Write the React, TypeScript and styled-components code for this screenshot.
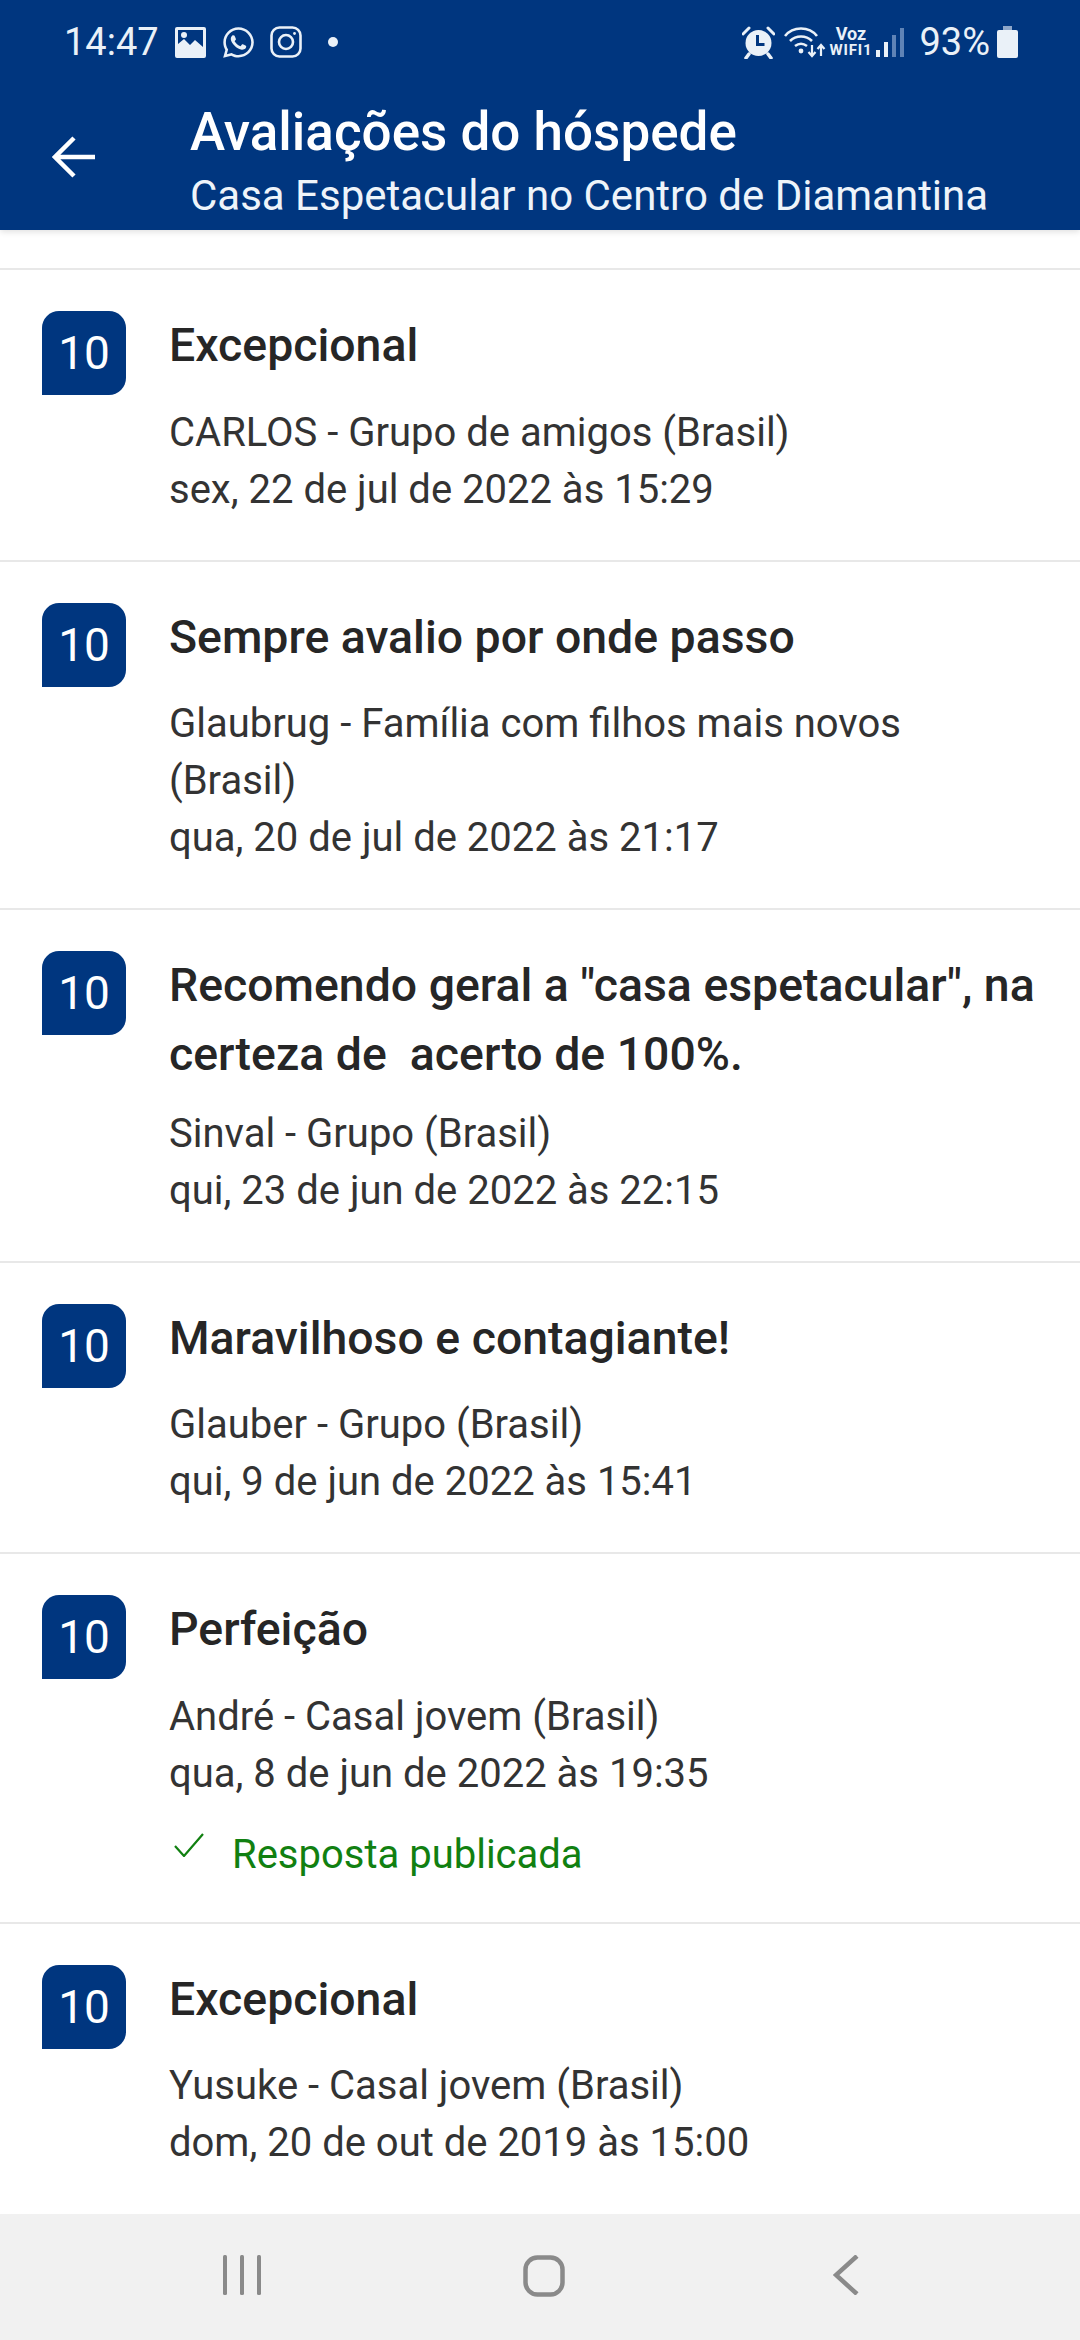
import * as React from 'react';
import styled, {createGlobalStyle} from 'styled-components';
import {FaWhatsapp} from 'react-icons/fa';

const GlobalStyle = createGlobalStyle`
	html, body {
		margin: 0;
		padding: 0;
		background: #fff;
		font-family: Roboto, "Liberation Sans", sans-serif;
	}
	* {
		box-sizing: border-box;
	}
`;

const Page = styled.div`
	width: 1080px;
	height: 2340px;
	display: flex;
	flex-direction: column;
	overflow: hidden;
	background: #fff;
`;

const Header = styled.header`
	height: 230px;
	flex: none;
	background: #00367f;
	color: #fff;
	box-shadow: 0 2px 6px rgba(0, 0, 0, 0.12);
	position: relative;
	z-index: 1;
`;

const StatusBar = styled.div`
	height: 84px;
	display: flex;
	align-items: center;
	padding: 0 62px 0 64px;
	color: #eaf1f8;
`;

const StatusGroup = styled.div`
	display: flex;
	align-items: center;
`;

const Clock = styled.span`
	font-size: 38px;
	margin-right: 17px;
	width: 94px;
`;

const Dot = styled.span`
	width: 10px;
	height: 10px;
	border-radius: 50%;
	background: #eaf1f8;
	margin-left: 26px;
`;

const Spacer = styled.div`
	flex: 1;
`;

const VoiceLabel = styled.div`
	display: flex;
	flex-direction: column;
	align-items: center;
	width: 39px;
	margin: 0 6px 0 5px;
	font-weight: 700;
`;

const VoiceLine = styled.span<{$size: number; $spacing: number}>`
	font-size: ${p => p.$size}px;
	letter-spacing: ${p => p.$spacing}px;
	line-height: 16px;
	white-space: nowrap;
`;

const Battery = styled.span`
	font-size: 38px;
	margin: 0 7px 0 15px;
`;

const AppBar = styled.div`
	display: flex;
	height: 146px;
`;

const BackButton = styled.div`
	width: 190px;
	flex: none;
	padding: 51px 0 0 52px;
`;

const AppTitles = styled.div`
	padding-top: 19px;
`;

const Title = styled.div`
	font-size: 53px;
	line-height: 58px;
	font-weight: 500;
	white-space: nowrap;
`;

const Subtitle = styled.div`
	font-size: 42px;
	line-height: 46px;
	margin-top: 12px;
	color: #eef4fa;
	white-space: nowrap;
`;

const ReviewList = styled.main`
	flex: 1;
	padding-top: 38px;
	overflow: hidden;
`;

const Row = styled.article`
	display: flex;
	gap: 43px;
	padding: 41px 30px 42px 42px;
	border-top: 2px solid #e8e8e8;
`;

const Score = styled.div`
	width: 84px;
	height: 84px;
	flex: none;
	background: #00367f;
	color: #fff;
	border-radius: 17px 17px 17px 0;
	display: flex;
	align-items: center;
	justify-content: center;
	font-size: 46px;
	font-weight: 400;
`;

const Content = styled.div`
	flex: 1;
	min-width: 0;
`;

const ReviewTitle = styled.h2`
	margin: 0;
	min-height: 77px;
	font-size: 46.400px;
	line-height: 69px;
	font-weight: 500;
	color: #262626;
	white-space: pre-wrap;
`;

const Meta = styled.div`
	margin-top: 15.500px;
	font-size: 40px;
	line-height: 57px;
	color: #333;
`;

const Reply = styled.div`
	display: flex;
	align-items: center;
	margin-top: 28px;
	height: 50px;
	padding-left: 5px;
	gap: 28px;
	font-size: 40px;
	color: #118011;
`;

const NavBar = styled.nav`
	height: 126px;
	flex: none;
	background: #f1f1f1;
	display: grid;
	grid-template-columns: repeat(3, 302px);
	justify-content: center;
	padding: 41px 0 0 8px;
`;

const NavCell = styled.div`
	display: flex;
	justify-content: center;
`;

const ImageIcon = () => (
	<svg width="31" height="31" viewBox="0 0 31 31" style={{marginRight: 15}}>
		<path fill="#eaf1f8" fillRule="evenodd" d="M2 0h27a2 2 0 0 1 2 2v27a2 2 0 0 1-2 2H2a2 2 0 0 1-2-2V2a2 2 0 0 1 2-2zm1 3v14l6-5 6 6 5-5 8 7V3z"/>
		<circle cx="9" cy="8" r="3" fill="#eaf1f8"/>
	</svg>
);

const InstagramIcon = () => (
	<svg width="32" height="32" viewBox="0 0 32 32" fill="none" stroke="#eaf1f8" strokeWidth="2.6" style={{marginLeft: 14}}>
		<rect x="1.5" y="1.5" width="29" height="29" rx="8"/>
		<circle cx="16" cy="16" r="7"/>
		<circle cx="24.5" cy="7.5" r="1.4" fill="#eaf1f8" stroke="none"/>
	</svg>
);

const AlarmIcon = () => (
	<svg width="33" height="33" viewBox="0 0 33 33" style={{marginRight: 9}}>
		<circle cx="16.5" cy="17" r="13" fill="#eaf1f8"/>
		<path d="M1 8l6-6M32 8l-6-6" stroke="#eaf1f8" strokeWidth="3" strokeLinecap="round"/>
		<path d="M7 28l-3 4M26 28l3 4" stroke="#eaf1f8" strokeWidth="3.5" strokeLinecap="round"/>
		<path d="M15.5 9v9.5h7" fill="none" stroke="#00367f" strokeWidth="3"/>
	</svg>
);

const WifiIcon = () => (
	<svg width="42" height="32" viewBox="0 0 42 32" fill="none" stroke="#eaf1f8" strokeWidth="2.6">
		<path d="M1 10C9 0 25 0 33 10"/>
		<path d="M6 15c6-6 16-6 22 0"/>
		<path d="M11 20c4-3 8-3 12 0"/>
		<circle cx="17" cy="25" r="2.4" fill="#eaf1f8" stroke="none"/>
		<path d="M28 19v11M24.500 26l3.500 4 3.500-4" strokeWidth="2.2"/>
		<path d="M37 30V19M33.500 23l3.500-4 3.500 4" strokeWidth="2.2"/>
	</svg>
);

const SignalIcon = () => (
	<svg width="28" height="32" viewBox="0 0 28 32">
		<rect x="0" y="24" width="4" height="7" fill="#eaf1f8"/>
		<rect x="8" y="16" width="4" height="15" fill="#eaf1f8"/>
		<rect x="16" y="9" width="4" height="22" fill="#5f83b6"/>
		<rect x="24" y="2" width="4" height="29" fill="#5f83b6"/>
	</svg>
);

const BatteryIcon = () => (
	<svg width="21" height="32" viewBox="0 0 21 32">
		<rect x="6" y="0" width="9" height="4" fill="#8ea7c9"/>
		<rect x="0" y="4" width="21" height="28" rx="2" fill="#eaf1f8"/>
	</svg>
);

const BackArrow = () => (
	<svg width="44" height="44" viewBox="0 0 44 44" fill="none" stroke="#fff" strokeWidth="4.500">
		<path d="M43 22H3M22 3L3 22l19 19"/>
	</svg>
);

const CheckIcon = () => (
	<svg width="30" height="24" viewBox="0 0 30 24" fill="none" stroke="#118011" strokeWidth="2.200" style={{marginTop: -20}}>
		<path d="M1 13l9 10L29 1"/>
	</svg>
);

const RecentsIcon = () => (
	<svg width="40" height="40" viewBox="0 0 40 40" fill="#8a8a8a">
		<rect x="1" y="0" width="4" height="40" rx="1.500"/>
		<rect x="18" y="0" width="4" height="40" rx="1.500"/>
		<rect x="35" y="0" width="4" height="40" rx="1.500"/>
	</svg>
);

const HomeIcon = () => (
	<svg width="42" height="42" viewBox="0 0 42 42" fill="none" stroke="#8a8a8a" strokeWidth="4.500">
		<rect x="2.500" y="2.500" width="37" height="37" rx="12"/>
	</svg>
);

const ChevronIcon = () => (
	<svg width="26" height="40" viewBox="0 0 26 40" fill="none" stroke="#8a8a8a" strokeWidth="4.500">
		<path d="M24 1L3 20l21 19"/>
	</svg>
);

type Review = {
	title: string;
	meta: string[];
	replied?: boolean;
};

const reviews: Review[] = [
	{title: 'Excepcional', meta: ['CARLOS - Grupo de amigos (Brasil)', 'sex, 22 de jul de 2022 às 15:29']},
	{title: 'Sempre avalio por onde passo', meta: ['Glaubrug - Família com filhos mais novos', '(Brasil)', 'qua, 20 de jul de 2022 às 21:17']},
	{title: 'Recomendo geral a "casa espetacular", na certeza de  acerto de 100%.', meta: ['Sinval - Grupo (Brasil)', 'qui, 23 de jun de 2022 às 22:15']},
	{title: 'Maravilhoso e contagiante!', meta: ['Glauber - Grupo (Brasil)', 'qui, 9 de jun de 2022 às 15:41']},
	{title: 'Perfeição', meta: ['André - Casal jovem (Brasil)', 'qua, 8 de jun de 2022 às 19:35'], replied: true},
	{title: 'Excepcional', meta: ['Yusuke - Casal jovem (Brasil)', 'dom, 20 de out de 2019 às 15:00']},
];

export default function App() {
	return <Page>
		<GlobalStyle/>
		<Header>
			<StatusBar>
				<StatusGroup>
					<Clock>14:47</Clock>
					<ImageIcon/>
					<FaWhatsapp size={35} color="#eaf1f8"/>
					<InstagramIcon/>
					<Dot/>
				</StatusGroup>
				<Spacer/>
				<StatusGroup>
					<AlarmIcon/>
					<WifiIcon/>
					<VoiceLabel>
						<VoiceLine $size={18} $spacing={0}>Voz</VoiceLine>
						<VoiceLine $size={15} $spacing={0.8}>WIFI1</VoiceLine>
					</VoiceLabel>
					<SignalIcon/>
					<Battery>93%</Battery>
					<BatteryIcon/>
				</StatusGroup>
			</StatusBar>
			<AppBar>
				<BackButton><BackArrow/></BackButton>
				<AppTitles>
					<Title>Avaliações do hóspede</Title>
					<Subtitle>Casa Espetacular no Centro de Diamantina</Subtitle>
				</AppTitles>
			</AppBar>
		</Header>
		<ReviewList>
			{reviews.map((review, index) => <Row key={index}>
				<Score>10</Score>
				<Content>
					<ReviewTitle>{review.title}</ReviewTitle>
					<Meta>{review.meta.map(line => <div key={line}>{line}</div>)}</Meta>
					{review.replied && <Reply><CheckIcon/>Resposta publicada</Reply>}
				</Content>
			</Row>)}
		</ReviewList>
		<NavBar>
			<NavCell><RecentsIcon/></NavCell>
			<NavCell><HomeIcon/></NavCell>
			<NavCell><ChevronIcon/></NavCell>
		</NavBar>
	</Page>;
}
